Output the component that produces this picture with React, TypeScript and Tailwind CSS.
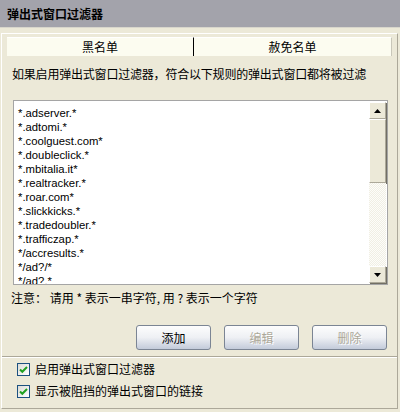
const rules = [
  '*.adserver.*',
  '*.adtomi.*',
  '*.coolguest.com*',
  '*.doubleclick.*',
  '*.mbitalia.it*',
  '*.realtracker.*',
  '*.roar.com*',
  '*.slickkicks.*',
  '*.tradedoubler.*',
  '*.trafficzap.*',
  '*/accresults.*',
  '*/ad?/*',
  '*/ad?.*',
];

const cjk = "font-['Noto_Sans_CJK_SC','Noto_Sans',sans-serif]";

function Arrow({ up }: { up?: boolean }) {
  return (
    <svg width="7" height="4" viewBox="0 0 7 4">
      <path d={up ? 'M3.5 0L7 4H0z' : 'M0 0h7L3.5 4z'} fill="#000" />
    </svg>
  );
}

function ScrollButton({ up }: { up?: boolean }) {
  return (
    <div className="h-[17px] flex items-center justify-center bg-[#ece9d8] border border-t-white border-l-white border-r-[#aca899] border-b-[#aca899] shadow-[1px_1px_0_#716f64]">
      <Arrow up={up} />
    </div>
  );
}

function XpButton({ label, disabled }: { label: string; disabled?: boolean }) {
  return (
    <button
      className={`w-[75px] h-[25px] rounded-[3px] border border-[#7b8594] bg-gradient-to-b from-[#fdfdfd] via-[#eef0f4] to-[#c3cbda] text-[12px] leading-none ${
        disabled ? 'text-[#aca899] [text-shadow:1px_1px_0_#fff]' : 'text-black'
      }`}
    >
      {label}
    </button>
  );
}

function CheckBox() {
  return (
    <div className="w-[13px] h-[13px] border border-[#1c5180] bg-gradient-to-br from-[#dcdcd7] to-white flex items-center justify-center">
      <svg width="9" height="9" viewBox="0 0 9 9">
        <path d="M1 4.5l2.3 2.3L8 2" stroke="#21a121" strokeWidth="2" fill="none" />
      </svg>
    </div>
  );
}

export default function App() {
  return (
    <div className={`w-[400px] h-[412px] bg-[#ece9d8] flex flex-col overflow-hidden text-black ${cjk}`}>
      <div className="h-[28px] shrink-0 bg-[#a3a3ab] border-b border-[#d8d6cc] flex items-center pl-[7px] text-[12px] font-bold">
        弹出式窗口过滤器
      </div>

      <div className="mt-[5px] ml-px w-[397px] h-[376px] flex flex-col border border-t-white border-l-white border-r-[#aca899] border-b-[#aca899]">
        <div className="mt-[3px] ml-[5px] flex h-[19px] text-[12px]">
          <div className="w-[187px] bg-[#fcfcf0] border-t border-t-white border-r border-r-black flex items-center justify-center">
            黑名单
          </div>
          <div className="w-[198px] bg-[#fcfcf0] border-t border-t-white border-r border-r-[#c9c7ba] flex items-center justify-center">
            赦免名单
          </div>
        </div>

        <div className="mt-[10px] pl-[10px] text-[12px] leading-[16px] tracking-[-0.2px]">
          如果启用弹出式窗口过滤器，符合以下规则的弹出式窗口都将被过滤
        </div>

        <div className="mt-[18px] ml-[11px] w-[375px] h-[185px] border border-[#a5a5a5] bg-white flex overflow-hidden">
          <div className="flex-1 pt-[5px] pl-[4px] overflow-hidden font-['Liberation_Sans','Arial',sans-serif] text-[11.3px] leading-[14px]">
            {rules.map((r) => (
              <div key={r} className="h-[14px] whitespace-nowrap">
                {r}
              </div>
            ))}
          </div>
          <div className="w-[17px] my-px mr-px flex flex-col">
            <ScrollButton up />
            <div className="h-[64px] bg-[#ece9d8] border border-t-white border-l-white border-r-[#aca899] border-b-[#aca899] shadow-[1px_1px_0_#716f64]" />
            <div className="flex-1 bg-[repeating-conic-gradient(#f1efe4_0_25%,#fdfdfa_0_50%)] bg-[length:2px_2px]" />
            <ScrollButton />
          </div>
        </div>

        <div className="mt-[5px] pl-[9px] text-[12px] leading-[16px] whitespace-pre">
          注意： 请用 * 表示一串字符, 用 ? 表示一个字符
        </div>

        <div className="mt-[19px] pr-[10px] flex justify-end gap-[13px]">
          <XpButton label="添加" />
          <XpButton label="编辑" disabled />
          <XpButton label="删除" disabled />
        </div>

        <div className="mt-[6px] border-t border-t-[#aca899] border-b border-b-white" />

        <div className="mt-[2px] pl-[15px] flex flex-col gap-[4px] text-[12px]">
          <label className="h-[18px] flex items-center gap-[5px]">
            <CheckBox />
            <span>启用弹出式窗口过滤器</span>
          </label>
          <label className="h-[18px] flex items-center gap-[5px]">
            <CheckBox />
            <span>显示被阻挡的弹出式窗口的链接</span>
          </label>
        </div>
      </div>
    </div>
  );
}
